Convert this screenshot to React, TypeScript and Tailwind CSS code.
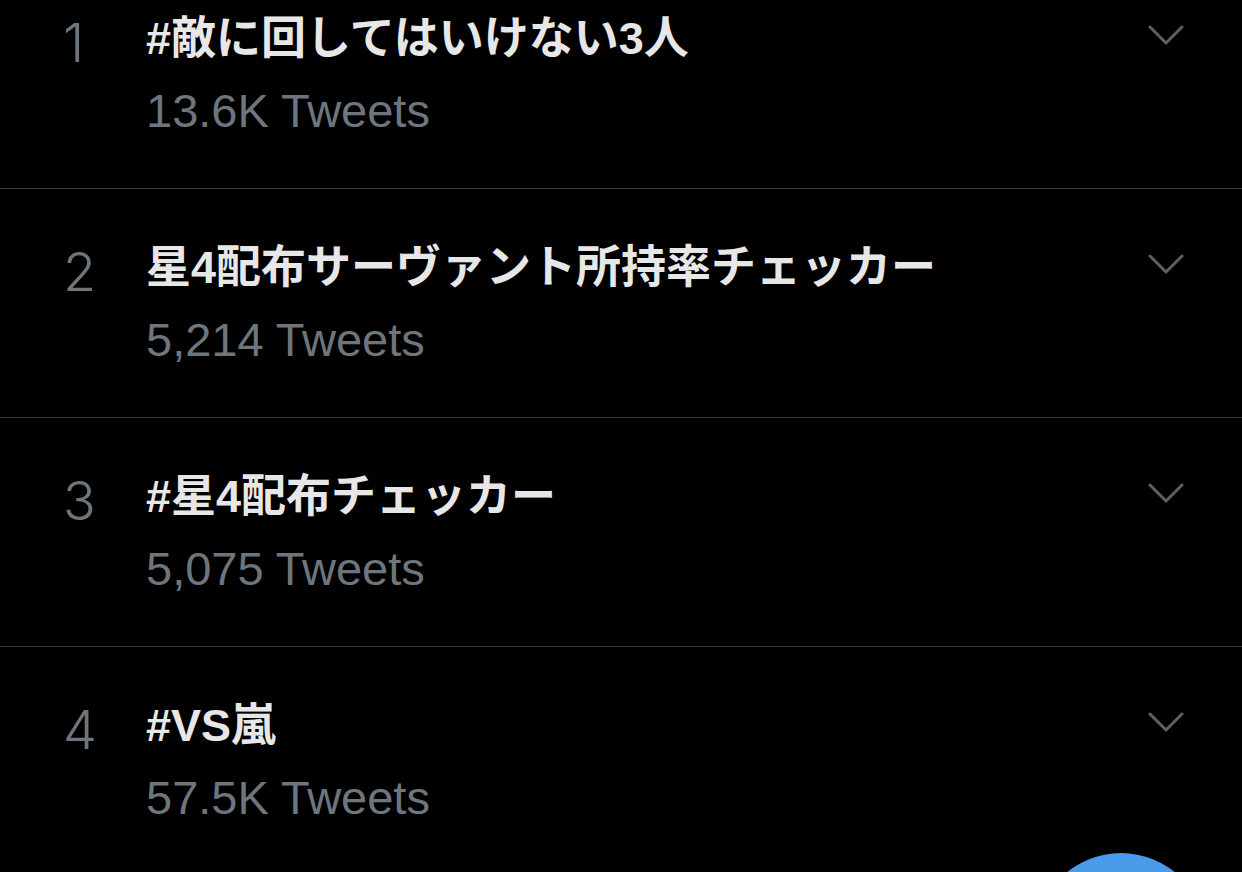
import React from "react";

type Trend = { rank: number; title: string; count: string };

const TRENDS: Trend[] = [
  { rank: 1, title: "#敵に回してはいけない3人", count: "13.6K Tweets" },
  { rank: 2, title: "星4配布サーヴァント所持率チェッカー", count: "5,214 Tweets" },
  { rank: 3, title: "#星4配布チェッカー", count: "5,075 Tweets" },
  { rank: 4, title: "#VS嵐", count: "57.5K Tweets" },
];

const Chevron = () => (
  <svg width="36" height="22" viewBox="0 0 36 22" fill="none" className="text-[#5c6166]">
    <path d="M2 3 L18 19 L34 3" stroke="currentColor" strokeWidth="3" strokeLinecap="round" strokeLinejoin="round" />
  </svg>
);

const TrendRow = ({ trend }: { trend: Trend }) => (
  <div className="relative flex h-[229px] border-b border-[#3a3a3c] pl-[63px] pr-[58px]">
    {/* rank */}
    <div
      className="w-[83px] shrink-0 pt-[55px] text-[54px] font-light leading-[56px] text-[#6e767d]"
      style={{ fontFamily: "Inter, 'Liberation Sans', sans-serif" }}
    >
      {trend.rank}
    </div>

    {/* body */}
    <div className="flex-1 pt-[51px]">
      <div
        className="text-[45px] font-bold leading-[56px] text-[#e7e7e7]"
        style={{ fontFamily: "'Liberation Sans', 'Noto Sans CJK JP', sans-serif" }}
      >
        {trend.title}
      </div>
      <div
        className="mt-[16px] text-[47px] leading-[56px] text-[#6e767d]"
        style={{ fontFamily: "'Liberation Sans', sans-serif" }}
      >
        {trend.count}
      </div>
    </div>

    {/* more */}
    <div className="shrink-0 pt-[64px]">
      <Chevron />
    </div>
  </div>
);

export default function App() {
  return (
    <div className="relative h-[872px] w-[1242px] overflow-hidden bg-black">
      <div className="-mt-[40px]">
        {TRENDS.map((t) => (
          <TrendRow key={t.rank} trend={t} />
        ))}
      </div>

      {/* compose button */}
      <div className="absolute left-[1036px] top-[853px] h-[170px] w-[170px] rounded-full bg-[#4a9aea]" />
    </div>
  );
}
